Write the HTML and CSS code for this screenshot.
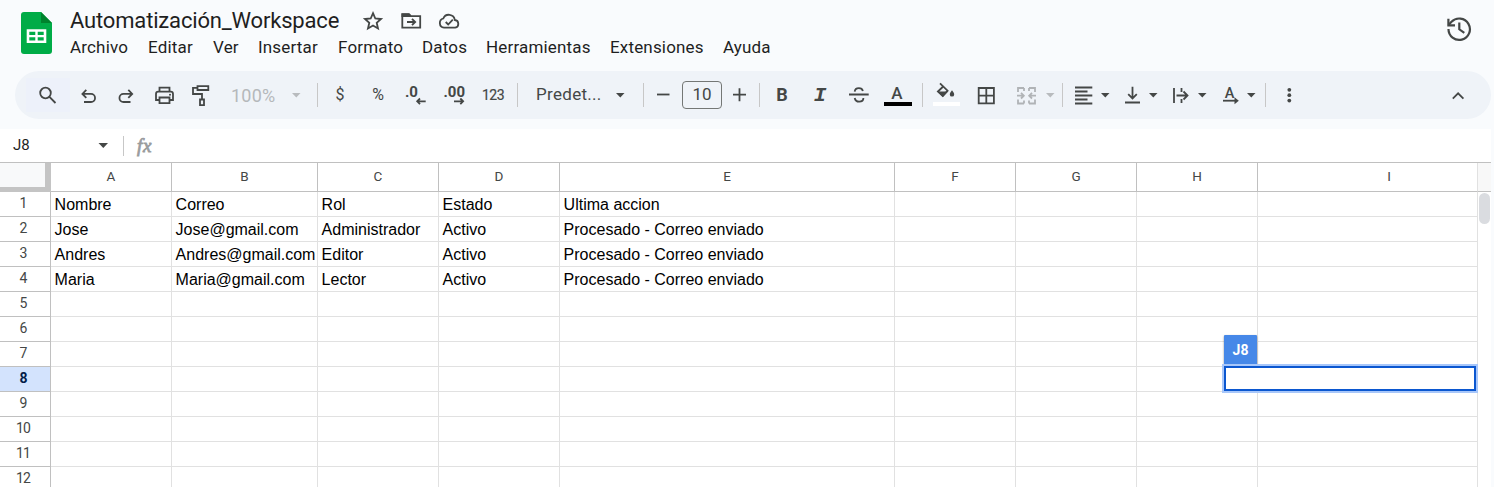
FILE: index.html
```
<!DOCTYPE html>
<html lang="es">
<head>
<meta charset="utf-8">
<title>Automatización_Workspace</title>
<link rel="stylesheet" href="styles.css">
</head>
<body>
<div class="app">
  <header class="top">
    <svg class="logo" viewBox="0 0 31 42"><path d="M3 0H20L31 11V39a3 3 0 0 1-3 3H3a3 3 0 0 1-3-3V3a3 3 0 0 1 3-3z" fill="#00ac47"/><path d="M20 0L31 11H20z" fill="#00832d"/><path d="M5.700 17.200H25.300V31H5.700zM8.300 19.800V23h6V19.800zM16.700 19.800V23h6V19.800zM8.300 25.300v3.200h6v-3.200zM16.700 25.300v3.200h6v-3.200z" fill="#fff" fill-rule="evenodd"/></svg>
    <div class="heading">
      <div class="title-row">
        <h1 class="title">Automatización_Workspace</h1>
        <svg class="t-icon star" viewBox="0 0 24 24"><path d="M12 4.200l2.300 5.300 5.700.5-4.300 3.800 1.300 5.700-5-3-5 3 1.300-5.700L4 10l5.700-.5z"/></svg>
        <svg class="t-icon folder" viewBox="0 0 24 24"><path d="M3.300 6.200V18.700H21.200V7.200H12L10 5.200H3.300zM8 13h8M13 9.800l3.200 3.200-3.200 3.200"/><path class="solid" d="M2.500 4.500H10L12 6.500V8H2.500z"/></svg>
        <svg class="t-icon cloud" viewBox="0 0 24 24"><path d="M7 18.700a4.700 4.700 0 0 1-.7-9.200A6 6 0 0 1 17.800 11a3.900 3.900 0 0 1 .4 7.700zM8.700 13l2.500 2.500 4.600-4.800"/></svg>
      </div>
      <nav class="menu"><span>Archivo</span><span>Editar</span><span>Ver</span><span>Insertar</span><span>Formato</span><span>Datos</span><span>Herramientas</span><span>Extensiones</span><span>Ayuda</span></nav>
    </div>
    <svg class="history" viewBox="0 0 26 26"><path d="M2.500 13A10.700 10.700 0 1 0 5.500 5.800L2.500 9M13.300 6.500v6.800l5 3.500"/><path d="M2.400 2.800v6.500H9"/></svg>
  </header>

  <div class="toolbar">
    <div class="search"><svg class="ic" viewBox="0 0 24 24"><circle cx="10.500" cy="10" r="5.300"/><path d="M14.200 13.700L20.500 20"/></svg></div>
    <svg class="ic g6" viewBox="0 0 24 24"><path d="M10.300 6.800L6.400 10.900l3.900 4M6.700 10.900H15a4 4 0 0 1 0 8.100H8"/></svg>
    <svg class="ic g14" viewBox="0 0 24 24"><path d="M14.300 6.800l3.900 4.100-3.900 4M17.900 10.900H9.500a4 4 0 0 0 0 8.100H16.500"/></svg>
    <svg class="ic g14" viewBox="0 0 24 24"><path d="M7.500 8.500V4.700h10v3.800M7.500 17H4V11a2.300 2.300 0 0 1 2.300-2.300h12.400A2.300 2.300 0 0 1 21 11v6h-3.500M7.500 14.500h10v5.700h-10z"/><circle class="dot" cx="18" cy="11.700" r="1"/></svg>
    <svg class="ic g13" viewBox="0 0 24 24"><path d="M8.500 3.200H19.300V7H8.500zM8.500 4.900H4V11h9v5M11 16.500h4v5.700h-4z"/></svg>
    <span class="zoom g18">100%</span>
    <i class="caret pale g15"></i>
    <i class="sep g16"></i>
    <span class="tx g10">$</span>
    <span class="tx g14">%</span>
    <svg class="ic g13" viewBox="0 0 24 24"><text class="num" x="2" y="14" textLength="13" lengthAdjust="spacingAndGlyphs">.0</text><path d="M22.700 18.300h-8M17 15.500l-2.800 2.800 2.800 2.800"/></svg>
    <svg class="ic g15" viewBox="0 0 24 24"><text class="num" x="1.500" y="14" textLength="21.500" lengthAdjust="spacingAndGlyphs">.00</text><path d="M12 18.300h8.500M18.300 15.500l2.800 2.800-2.800 2.800"/></svg>
    <span class="tx n123 g15">123</span>
    <i class="sep g12"></i>
    <span class="font g18">Predet...</span>
    <i class="caret g13"></i>
    <i class="sep g18"></i>
    <svg class="ic g7" viewBox="0 0 24 24"><path d="M6 11.500h12.500"/></svg>
    <span class="size g7">10</span>
    <svg class="ic g5" viewBox="0 0 24 24"><path d="M6 11.700h13M12.500 5.200v13"/></svg>
    <i class="sep g8"></i>
    <span class="tx bold g10">B</span>
    <span class="tx italic g14">I</span>
    <svg class="ic g15" viewBox="0 0 24 24"><path d="M2 11.500h19.700M7.700 8.700c.2-2.200 1.800-3.500 4.200-3.500 2 0 3.500 1 4 2.800M7.700 15c.5 2.400 2.200 3.700 4.500 3.700 2.600 0 4.200-1.300 4.200-3.700"/></svg>
    <svg class="ic g14" viewBox="0 0 24 24"><text class="letter" x="12" y="15.500">A</text><path class="solid black" d="M-1 19h28v4H-1z"/></svg>
    <i class="sep g13"></i>
    <svg class="ic g11" viewBox="0 0 24 24"><path d="M6 .3L13.600 7.700 8.800 13 3.900 8.500 9.200 3.500"/><path class="solid" d="M3.500 8.500H14L8.800 14z"/><path class="solid" d="M18 7.200c1.300 1.700 2.200 2.900 2.200 4.200a2.200 2.200 0 0 1-4.400 0c0-1.300.9-2.500 2.200-4.200z"/><path class="solid white" d="M-1 19h27v4H-1z"/></svg>
    <svg class="ic g16" viewBox="0 0 24 24"><path d="M4.700 5h15.200v15.300H4.700zM12.300 5v15.300M4.700 12.600h15.200"/></svg>
    <svg class="ic faded g16" viewBox="0 0 24 24"><path d="M10 5H4v4M4 16.500v4h6M15 5h6v4M21 16.500v4h-6M10 5v3M10 17.500v3M15 5v3M15 17.500v3M3 12.700h6.500M7 9.900l2.800 2.800L7 15.500M22 12.700h-6.500M18 9.900l-2.800 2.800 2.800 2.800"/></svg>
    <i class="caret pale g7"></i>
    <i class="sep g7"></i>
    <svg class="ic g9" viewBox="0 0 24 24"><path d="M3 4.500h17.300M3 8.500h12.500M3 12.500h17.300M3 16.500h12.500M3 20.500h17.300"/></svg>
    <i class="caret g4"></i>
    <svg class="ic g10" viewBox="0 0 24 24"><path d="M5 19.500h15M12.500 3.700v11.500M8.200 11.200l4.300 4.300 4.300-4.300"/></svg>
    <i class="caret g4"></i>
    <svg class="ic g10" viewBox="0 0 24 24"><path d="M6 5v15M13.500 5v4M13.500 16v4M8.500 12.500H19M15.500 8.500l4 4-4 4"/></svg>
    <i class="caret g5"></i>
    <svg class="ic g12" viewBox="0 0 24 24"><text class="letter small" x="10.500" y="14.700">A</text><path d="M4 17.700h13"/><path class="solid" d="M15.500 14.200l4.300 3.500-4.300 3.500z"/></svg>
    <i class="caret g3"></i>
    <i class="sep g9"></i>
    <svg class="ic g11" viewBox="0 0 24 24"><circle class="dot" cx="12.300" cy="6.800" r="1.900"/><circle class="dot" cx="12.300" cy="12.200" r="1.900"/><circle class="dot" cx="12.300" cy="17.600" r="1.900"/></svg>
    <svg class="ic collapse" viewBox="0 0 24 24"><path d="M6.800 15.600l5.300-5.300 5.300 5.300"/></svg>
  </div>

  <div class="formula">
    <span class="name">J8</span><i class="caret"></i><i class="fsep"></i><span class="fx">fx</span>
  </div>

  <main class="sheet">
    <div class="grid head">
      <div class="corner"></div><div>A</div><div>B</div><div>C</div><div>D</div><div>E</div><div>F</div><div>G</div><div>H</div><div>I</div>
    </div>
    <div class="grid row"><b>1</b><div>Nombre</div><div>Correo</div><div>Rol</div><div>Estado</div><div>Ultima accion</div><div></div><div></div><div></div><div></div></div>
    <div class="grid row"><b>2</b><div>Jose</div><div>Jose@gmail.com</div><div>Administrador</div><div>Activo</div><div>Procesado - Correo enviado</div><div></div><div></div><div></div><div></div></div>
    <div class="grid row"><b>3</b><div>Andres</div><div>Andres@gmail.com</div><div>Editor</div><div>Activo</div><div>Procesado - Correo enviado</div><div></div><div></div><div></div><div></div></div>
    <div class="grid row"><b>4</b><div>Maria</div><div>Maria@gmail.com</div><div>Lector</div><div>Activo</div><div>Procesado - Correo enviado</div><div></div><div></div><div></div><div></div></div>
    <div class="grid row"><b>5</b><div></div><div></div><div></div><div></div><div></div><div></div><div></div><div></div><div></div></div>
    <div class="grid row"><b>6</b><div></div><div></div><div></div><div></div><div></div><div></div><div></div><div></div><div></div></div>
    <div class="grid row"><b>7</b><div></div><div></div><div></div><div></div><div></div><div></div><div></div><div></div><div></div></div>
    <div class="grid row active"><b>8</b><div></div><div></div><div></div><div></div><div></div><div></div><div></div><div></div><div></div></div>
    <div class="grid row"><b>9</b><div></div><div></div><div></div><div></div><div></div><div></div><div></div><div></div><div></div></div>
    <div class="grid row"><b>10</b><div></div><div></div><div></div><div></div><div></div><div></div><div></div><div></div><div></div></div>
    <div class="grid row"><b>11</b><div></div><div></div><div></div><div></div><div></div><div></div><div></div><div></div><div></div></div>
    <div class="grid row"><b>12</b><div></div><div></div><div></div><div></div><div></div><div></div><div></div><div></div><div></div></div>
    <div class="scroll"><div class="thumb"></div></div>
    <div class="tag">J8</div>
    <div class="selection"></div>
  </main>
</div>
</body>
</html>
```
FILE: styles.css
```
* { box-sizing: border-box; }
body { margin: 0; background: #f9fbfd; font-family: Roboto, "Liberation Sans", sans-serif; color: #1f1f1f; }
.app { width: 1494px; height: 487px; overflow: hidden; }

.top { display: flex; height: 71px; padding: 0 22px 0 21px; }
.logo { width: 31px; height: 42px; margin-top: 12px; }
.heading { margin-left: 18px; flex: 1; }
.title-row { display: flex; height: 37px; align-items: center; padding-top: 4px; }
.title { margin: 0; font-size: 22px; font-weight: 400; line-height: 30px; width: 269px; white-space: nowrap; letter-spacing: -.17px; }
.t-icon { width: 24px; height: 24px; fill: none; stroke: #444746; stroke-width: 1.8; }
.t-icon .solid { fill: #444746; stroke: none; }
.star { margin-left: 21.500px; }
.folder { margin-left: 14px; }
.cloud { margin-left: 14px; }
.menu { display: grid; grid-template-columns: 78px 65px 45px 80px 84px 64px 124px 113px 60px; font-size: 17px; line-height: 20px; letter-spacing: .17px; }
.history { width: 26px; height: 26px; margin-top: 16px; fill: none; stroke: #444746; stroke-width: 2.200; }

.toolbar { display: flex; align-items: center; width: 1476px; height: 48px; margin-left: 15px; padding: 0 21px 0 11px; border-radius: 24px; background: #eff3f8; color: #444746; }
.search { display: flex; align-items: center; width: 44px; height: 34px; padding-left: 9px; background: #edf1fa; }
.ic { flex: none; width: 24px; height: 24px; overflow: visible; fill: none; stroke: #444746; stroke-width: 1.800; }
.ic text { fill: #444746; stroke: none; }
.ic .dot, .ic .solid { fill: #444746; stroke: none; }
.ic .black { fill: #000; }
.ic .white { fill: #fff; }
.ic.faded { stroke: #b0b3b6; }
.num { font-size: 15.500px; font-weight: 700; }
.letter { font-size: 17px; font-weight: 500; text-anchor: middle; }
.letter.small { font-size: 14.500px; }
.collapse { margin-left: auto; }
.caret { flex: none; width: 10px; height: 5px; background: #444746; clip-path: polygon(.5px 0, 100% 0, 5.300px 100%); }
.pale { background: #b8bbbe; }
.sep { flex: none; width: 1px; height: 24px; background: #c7c7c7; }
.tx { flex: none; width: 24px; text-align: center; font-size: 16px; line-height: 24px; }
.n123 { font-size: 14px; letter-spacing: -.5px; white-space: nowrap; -webkit-text-stroke: .2px #444746; }
.zoom { flex: none; width: 45px; font-size: 18px; letter-spacing: .2px; color: #b5b8bb; white-space: nowrap; }
.font { flex: none; width: 66px; font-size: 17px; line-height: 22px; padding-bottom: 2px; letter-spacing: .3px; white-space: nowrap; }
.size { flex: none; width: 40px; height: 28px; border: 1px solid #747775; border-radius: 4px; text-align: center; font-size: 17px; line-height: 25px; }
.bold { font-size: 18px; font-weight: 700; }
.italic { font: italic 700 21px/27px "Liberation Mono", monospace; }
.g3 { margin-left: 3px; } .g4 { margin-left: 4px; } .g5 { margin-left: 5px; } .g6 { margin-left: 6px; }
.g7 { margin-left: 7px; } .g8 { margin-left: 8px; } .g9 { margin-left: 9px; } .g10 { margin-left: 10px; }
.g11 { margin-left: 11px; } .g12 { margin-left: 12px; } .g13 { margin-left: 13px; } .g14 { margin-left: 14px; }
.g15 { margin-left: 15px; } .g16 { margin-left: 16px; } .g18 { margin-left: 18px; }

.formula { display: flex; align-items: center; width: 1491px; height: 33px; margin-top: 10px; padding-left: 13px; background: #fff; }
.name { width: 85px; padding-bottom: 2px; font-size: 15px; }
.fsep { width: 1px; height: 20px; margin-left: 15px; background: #c7c7c7; }
.fx { margin-left: 13px; font: italic 400 19px/22px "Liberation Serif", serif; letter-spacing: .7px; color: #9a9c9e; -webkit-text-stroke: .8px #9a9c9e; }

.sheet { position: relative; width: 1491px; height: 325px; border-top: 1px solid #c0c0c0; background: #fff; }
.grid { display: grid; width: 1478px; grid-template-columns: 51px 121px 146px 121px 121px 335px 121px 121px 121px 220px; }
.head { height: 29px; grid-template-rows: 29px; font-size: 13.500px; line-height: 26px; text-align: center; color: #444746; }
.head > div { border-right: 1px solid #c0c0c0; border-bottom: 1px solid #c0c0c0; }
.head > div:last-child { border-right-color: #e1e1e1; padding-left: 43px; }
.head > .corner { border-right: 6px solid #c4c4c4; border-bottom: 5px solid #c4c4c4; background: #f8f9fa; }
.row { height: 25px; grid-template-rows: 25px; }
.row > * { border-right: 1px solid #e1e1e1; border-bottom: 1px solid #e1e1e1; }
.row > b { border-color: #c0c0c0; font-size: 14px; font-weight: 400; line-height: 22px; letter-spacing: -.8px; text-align: center; padding-right: 4px; color: #444746; }
.row > div { padding: 1px 0 0 3.600px; font: 16px/23px "Liberation Sans", Arial, sans-serif; color: #000; white-space: nowrap; }
.row.active > b { background: #d3e3fd; font-weight: 700; color: #041e49; }
.scroll { position: absolute; top: 0; right: 0; width: 13px; height: 325px; padding: 30px 1px 0; background: linear-gradient(#f8f8f8 28px, #c0c0c0 28px, #c0c0c0 29px, #fff 29px); }
.thumb { height: 31px; border-radius: 6px; background: #dadce0; }
.tag { position: absolute; left: 1224px; top: 172px; width: 33px; height: 30px; border-radius: 1px; background: #4688e8; color: #fff; font: 700 14px/30px Roboto, sans-serif; text-align: center; box-shadow: 0 1px 2px rgba(0,0,0,.5); }
.selection { position: absolute; left: 1224px; top: 203px; width: 252px; height: 25px; border: 2px solid #0b57d0; background: #fff; box-shadow: 0 0 0 2px #a8c7fa; }
```
